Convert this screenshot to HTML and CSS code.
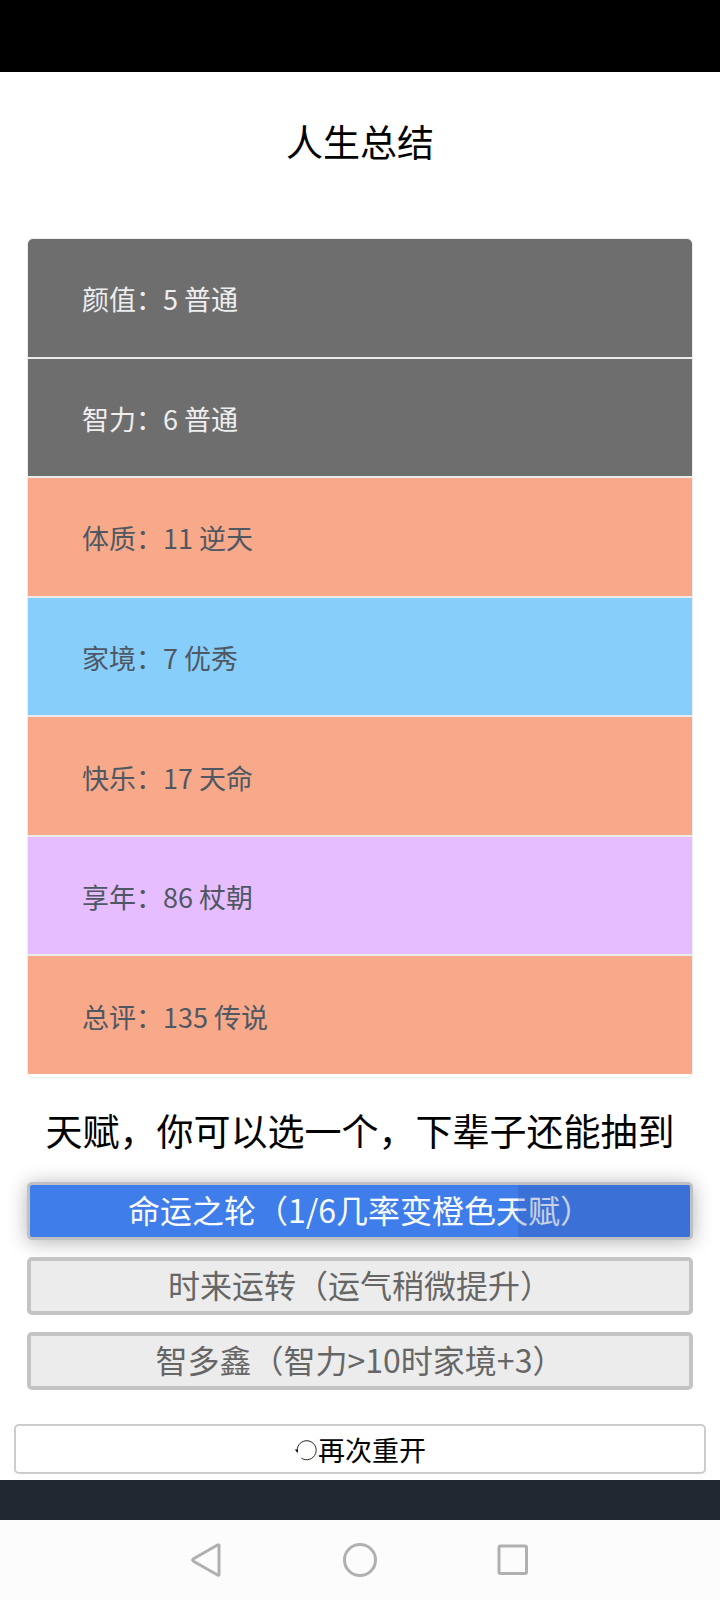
FILE: index.html
```html
<!DOCTYPE html>
<html lang="zh-CN">
<head>
  <meta charset="UTF-8">
  <meta name="viewport" content="width=device-width, initial-scale=1.0">
  <title>人生总结</title>
  <link rel="stylesheet" href="styles.css">
</head>
<body>
  <header class="status-bar"></header>

  <main class="summary">
    <h1 class="title">人生总结</h1>

    <ul class="judge-list">
      <li class="grade-0">颜值：5 普通</li>
      <li class="grade-0">智力：6 普通</li>
      <li class="grade-3">体质：11 逆天</li>
      <li class="grade-1">家境：7 优秀</li>
      <li class="grade-3">快乐：17 天命</li>
      <li class="grade-2">享年：86 杖朝</li>
      <li class="grade-3">总评：135 传说</li>
    </ul>

    <h2 class="talent-title">天赋，你可以选一个，下辈子还能抽到</h2>

    <div class="talents">
      <button class="talent selected" type="button">命运之轮（1/6几率变橙色天赋）</button>
      <button class="talent" type="button">时来运转（运气稍微提升）</button>
      <button class="talent" type="button">智多鑫（智力&gt;10时家境+3）</button>
    </div>

    <button class="again" type="button">
      <svg class="again-icon" viewBox="0 0 24 24" aria-hidden="true">
        <path d="M7.500 21.200A9.500 9.500 0 1 0 3.200 14"/>
        <path class="tip" d="M.8 12.500l2.800 3.400.4-3.200z"/>
      </svg>再次重开
    </button>
  </main>

  <div class="tab-strip"></div>

  <nav class="nav-bar">
    <button type="button" aria-label="返回">
      <svg viewBox="0 0 36 36"><path d="M30 3.800v28.400q0 1.600-1.500.8L4.500 19.200q-1.800-1.200 0-2.400L28.500 3q1.500-.8 1.500.8z"/></svg>
    </button>
    <button type="button" aria-label="主页">
      <svg viewBox="0 0 36 36"><circle cx="18" cy="18" r="15.500"/></svg>
    </button>
    <button type="button" aria-label="最近任务">
      <svg viewBox="0 0 36 36"><rect x="4" y="4" width="27.500" height="27.500" rx="1.500"/></svg>
    </button>
  </nav>
</body>
</html>
```
FILE: styles.css
```css
* {
  box-sizing: border-box;
}

body {
  margin: 0;
  min-height: 100vh;
  display: flex;
  flex-direction: column;
  background: #fff;
  color: #000;
  font-family: "Noto Sans CJK SC", sans-serif;
}

button {
  font-family: inherit;
  margin: 0;
  cursor: pointer;
}

.status-bar {
  height: 72px;
  background: #000;
}

.summary {
  flex: 1;
  display: flex;
  flex-direction: column;
  padding: 0 14px 6px;
}

.title,
.talent-title {
  margin: 0;
  font-size: 37px;
  font-weight: 400;
  text-align: center;
}

.title {
  padding: 41px 0 69px;
  line-height: 56px;
}

/* attribute rows */
.judge-list {
  display: grid;
  grid-auto-rows: 1fr;
  height: 840px;
  margin: 0 13px;
  padding: 0 0 1px;
  list-style: none;
  border: 1px solid #ebebeb;
  border-radius: 6px;
  overflow: hidden;
}

.judge-list li {
  display: flex;
  align-items: center;
  padding: 2px 54px 0;
  font-size: 27px;
  color: #4f5862;
  border-bottom: 2px solid #ebebeb;
}

.judge-list li:last-child {
  border-bottom-color: #fff;
}

.judge-list .grade-0 {
  background: #6e6e6e;
  color: #eee;
}

.judge-list .grade-1 {
  background: #88cefb;
}

.judge-list .grade-2 {
  background: #e6beff;
}

.judge-list .grade-3 {
  background: #f7a98a;
}

.talent-title {
  padding: 24px 0;
  line-height: 56px;
}

.talents {
  display: flex;
  flex-direction: column;
  gap: 17px;
  padding: 0 13px;
}

.talent {
  position: relative;
  height: 58px;
  padding: 0 0 4px;
  border: 4px solid #c4c4c4;
  border-radius: 5px;
  background: #ececec;
  color: #666;
  font-size: 32px;
  line-height: 46px;
}

.talent.selected {
  border: 3px solid #bdc1c4;
  background: #3e7dea;
  color: #f8fbff;
  box-shadow: 0 2px 20px rgba(0, 0, 0, .3);
}

/* press ripple */
.talent.selected::after {
  content: "";
  position: absolute;
  inset: 0 0 0 74%;
  background: rgba(50, 80, 160, .25);
}

.again {
  display: flex;
  align-items: center;
  justify-content: center;
  height: 50px;
  margin-top: auto;
  padding: 0;
  border: 2px solid #ccc;
  border-radius: 5px;
  background: #fff;
  color: #000;
  font-size: 27px;
}

.again-icon {
  width: 24px;
  height: 24px;
  fill: none;
  stroke: #222;
}

.again-icon .tip {
  fill: #000;
  stroke: none;
}

.tab-strip {
  height: 40px;
  background: #222831;
}

/* system navigation */
.nav-bar {
  display: flex;
  align-items: center;
  justify-content: center;
  gap: 117px;
  height: 80px;
  background: #fcfcfc;
}

.nav-bar button {
  padding: 0;
  border: 0;
  background: none;
}

.nav-bar svg {
  display: block;
  width: 36px;
  height: 36px;
  fill: none;
  stroke: #b0b0b0;
  stroke-width: 3;
}
```
